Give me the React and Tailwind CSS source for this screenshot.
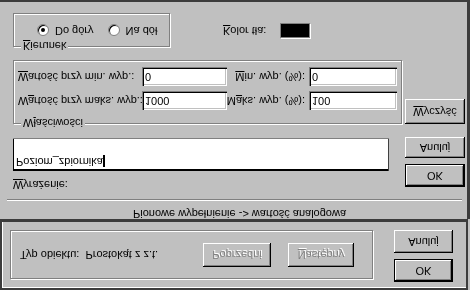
import React from "react";

// the whole dialog is shown mirrored top-to-bottom: bevels stay as drawn, only the text is flipped
function T({ children, className = "" }) {
  return (
    <span className={`inline-block -scale-y-100 whitespace-nowrap leading-[13px] ${className}`}>{children}</span>
  );
}

function Btn({ children, className = "", def = false, disabled = false }) {
  return (
    <div
      className={`flex items-center justify-center bg-[#c0c0c0] ${
        def
          ? "border border-black shadow-[inset_-1px_-1px_#000,inset_1px_1px_#fff,inset_-2px_-2px_#808080]"
          : "shadow-[inset_-1px_-1px_#000,inset_1px_1px_#fff,inset_-2px_-2px_#808080]"
      } ${className}`}
    >
      <T className={disabled ? "text-[#808080] [text-shadow:1px_1px_0_#fff]" : "text-black"}>{children}</T>
    </div>
  );
}

function Field({ value, className = "" }) {
  return (
    <div
      className={`flex items-center bg-white pl-[3px] shadow-[inset_1px_1px_#808080,inset_2px_2px_#000,inset_-1px_-1px_#fff,inset_-2px_-2px_#c0c0c0] ${className}`}
    >
      <T>{value}</T>
    </div>
  );
}

function Group({ label, className = "", children }) {
  return (
    <div className={`relative border border-[#808080] shadow-[1px_1px_0_#fff,inset_1px_1px_0_#fff] ${className}`}>
      {children}
      {label && (
        <div className="absolute left-[7px] bottom-[-7px] bg-[#c0c0c0] px-[2px]">
          <T>{label}</T>
        </div>
      )}
    </div>
  );
}

function Radio({ on }) {
  return (
    <div className="flex h-3 w-3 items-center justify-center rounded-full border border-[#808080] bg-white shadow-[inset_1px_1px_#000]">
      {on && <div className="h-1 w-1 rounded-full bg-black" />}
    </div>
  );
}

export default function App() {
  return (
    <div className="h-[290px] w-[470px] overflow-hidden bg-[#c0c0c0] text-[11px] text-black [font-family:'Liberation_Sans',Arial,sans-serif]">
      {/* upper window */}
      <div className="h-[219px] border-t-2 border-r-[3px] border-[#3c3c3c]">
        <div className="ml-[13px] mt-[11px] flex items-center">
          <Group
            className="h-[34px] w-[157px]"
            label={
              <>
                <u>K</u>ierunek
              </>
            }
          >
            <div className="flex h-full items-center pl-[23px]">
              <Radio on />
              <T className="ml-[6px]">Do góry</T>
              <div className="ml-[14px]">
                <Radio />
              </div>
              <T className="ml-[6px]">Na dół</T>
            </div>
          </Group>
          <T className="ml-[53px]">
            <u>K</u>olor tła:
          </T>
          <div className="ml-[14px] h-[15px] w-[30px] border border-[#808080] bg-black shadow-[1px_1px_0_#fff]" />
        </div>

        <div className="ml-[13px] mt-[13px] flex items-start">
          <Group
            className="h-[64px] w-[389px]"
            label={
              <>
                W<u>ł</u>aściwości
              </>
            }
          >
            <div className="flex flex-col gap-[5px] pl-[4px] pt-[6px]">
              <div className="flex items-center">
                <div className="w-[124px]">
                  <T>
                    <u>W</u>artość przy min. wyp.:
                  </T>
                </div>
                <Field value="0" className="h-[19px] w-[85px]" />
                <div className="flex w-[82px] justify-end pr-[4px]">
                  <T>
                    <u>M</u>in. wyp. (%):
                  </T>
                </div>
                <Field value="0" className="h-[19px] w-[88px]" />
              </div>
              <div className="flex items-center">
                <div className="w-[124px]">
                  <T>
                    W<u>a</u>rtość przy maks. wyp.:
                  </T>
                </div>
                <Field value="1000" className="h-[19px] w-[85px]" />
                <div className="flex w-[82px] justify-end pr-[4px]">
                  <T>
                    M<u>a</u>ks. wyp. (%):
                  </T>
                </div>
                <Field value="100" className="h-[19px] w-[88px]" />
              </div>
            </div>
          </Group>
          <Btn className="ml-[3px] mt-[39px] h-[25px] w-[60px]">
            <u>W</u>yczyść
          </Btn>
        </div>

        <div className="ml-[13px] mt-[13px] flex items-start">
          <div className="flex w-[376px] flex-col">
            <div className="mt-[1px] flex h-[33px] items-end bg-white pb-[3px] pl-[3px] shadow-[inset_0_1px_#808080,inset_1px_0_#000,inset_-1px_0_#404040,inset_0_-2px_#000]">
              <T>Poziom_zbiornika</T>
              <div className="mb-[1px] h-[12px] w-[2px] bg-black" />
            </div>
            <div className="mt-[5px]">
              <T>
                <u>W</u>yrażenie:
              </T>
            </div>
          </div>
          <div className="ml-[16px] flex flex-col">
            <Btn className="h-[21px] w-[60px]">Anuluj</Btn>
            <Btn def className="mt-[6px] h-[23px] w-[60px]">
              OK
            </Btn>
          </div>
        </div>

        <div className="ml-[7px] mt-[6px] w-[455px] border-t border-b border-t-[#808080] border-b-white" />
        <div className="mt-[4px] pl-[12px] text-center">
          <T>Pionowe wypełnienie -&gt; wartość analogowa</T>
        </div>
      </div>

      {/* lower window */}
      <div className="h-[71px] w-[468px] border-2 border-t-[3px] border-[#3c3c3c] shadow-[inset_1px_0_#fff,inset_0_-1px_#fff]">
        <div className="flex items-start pl-[8px] pt-[8px]">
          <Group className="h-[49px] w-[363px]">
            <div className="flex h-full items-center pl-[9px]">
              <div className="w-[183px]">
                <T>Typ obiektu:&nbsp;&nbsp;Prostokąt z z.t.</T>
              </div>
              <Btn disabled className="h-[24px] w-[68px]">
                Poprzedni
              </Btn>
              <Btn disabled className="ml-[17px] h-[24px] w-[66px]">
                <u>N</u>astępny
              </Btn>
            </div>
          </Group>
          <div className="ml-[21px] flex flex-col">
            <Btn className="h-[23px] w-[59px]">Anuluj</Btn>
            <Btn def className="mt-[6px] h-[23px] w-[59px]">
              OK
            </Btn>
          </div>
        </div>
      </div>
    </div>
  );
}
